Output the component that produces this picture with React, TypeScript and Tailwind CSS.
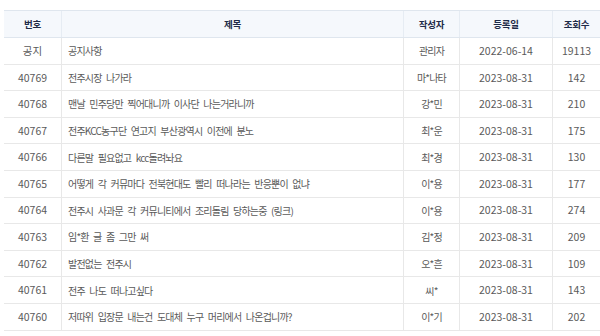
const rows = [
  { no: "공지", title: "공지사항", author: "관리자", date: "2022-06-14", views: "19113" },
  { no: "40769", title: "전주시장 나가라", author: "마*나타", date: "2023-08-31", views: "142" },
  { no: "40768", title: "맨날 민주당만 찍어대니까 이사단 나는거라니까", author: "강*민", date: "2023-08-31", views: "210" },
  { no: "40767", title: "전주KCC농구단 연고지 부산광역시 이전에 분노", author: "최*운", date: "2023-08-31", views: "175" },
  { no: "40766", title: "다른말 필요없고 kcc돌려놔요", author: "최*경", date: "2023-08-31", views: "130" },
  { no: "40765", title: "어떻게 각 커뮤마다 전북현대도 빨리 떠나라는 반응뿐이 없냐", author: "이*용", date: "2023-08-31", views: "177" },
  { no: "40764", title: "전주시 사과문 각 커뮤니티에서 조리돌림 당하는중 (링크)", author: "이*용", date: "2023-08-31", views: "274" },
  { no: "40763", title: "임*환 글 좀 그만 써", author: "김*정", date: "2023-08-31", views: "209" },
  { no: "40762", title: "발전없는 전주시", author: "오*흔", date: "2023-08-31", views: "109" },
  { no: "40761", title: "전주 나도 떠나고싶다", author: "씨*", date: "2023-08-31", views: "143" },
  { no: "40760", title: "저따위 입장문 내는건 도대체 누구 머리에서 나온겁니까?", author: "이*기", date: "2023-08-31", views: "202" },
];

const cols = "grid grid-cols-[57px_342px_56px_93px_1fr]";

export default function App() {
  return (
    <div className="w-[600px] h-[336px] bg-white overflow-hidden pt-[10px] pl-[4px] font-['Noto_Sans_CJK_KR','Noto_Sans',sans-serif]">
      <div className={`${cols} h-[28px] bg-[#f5f8fc] border-t border-b border-[#dfe6ee] text-[9.5px] font-bold text-[#1e2b48] tracking-[-0.03em]`}>
        <div className="flex items-center justify-center">번호</div>
        <div className="flex items-center justify-center border-l border-[#e6ecf3]">제목</div>
        <div className="flex items-center justify-center border-l border-[#e6ecf3]">작성자</div>
        <div className="flex items-center justify-center border-l border-[#e6ecf3]">등록일</div>
        <div className="flex items-center justify-center border-l border-[#e6ecf3]">조회수</div>
      </div>
      {rows.map((r) => (
        <div key={r.no} className={`${cols} h-[26.6px] border-b border-[#e8e8e8] text-[#5a5a5a]`}>
          <div className="flex items-center justify-center text-[10.5px]">{r.no}</div>
          <div className="flex items-center pl-[6px] border-l border-[#e8e8e8] text-[10px] tracking-[-0.08em] [word-spacing:3px] whitespace-pre truncate">{r.title}</div>
          <div className="flex items-center justify-center border-l border-[#e8e8e8] text-[10px] tracking-[-0.08em]">{r.author}</div>
          <div className="flex items-center justify-center border-l border-[#e8e8e8] text-[10.5px]">{r.date}</div>
          <div className="flex items-center justify-center border-l border-[#e8e8e8] text-[10.5px]">{r.views}</div>
        </div>
      ))}
    </div>
  );
}
